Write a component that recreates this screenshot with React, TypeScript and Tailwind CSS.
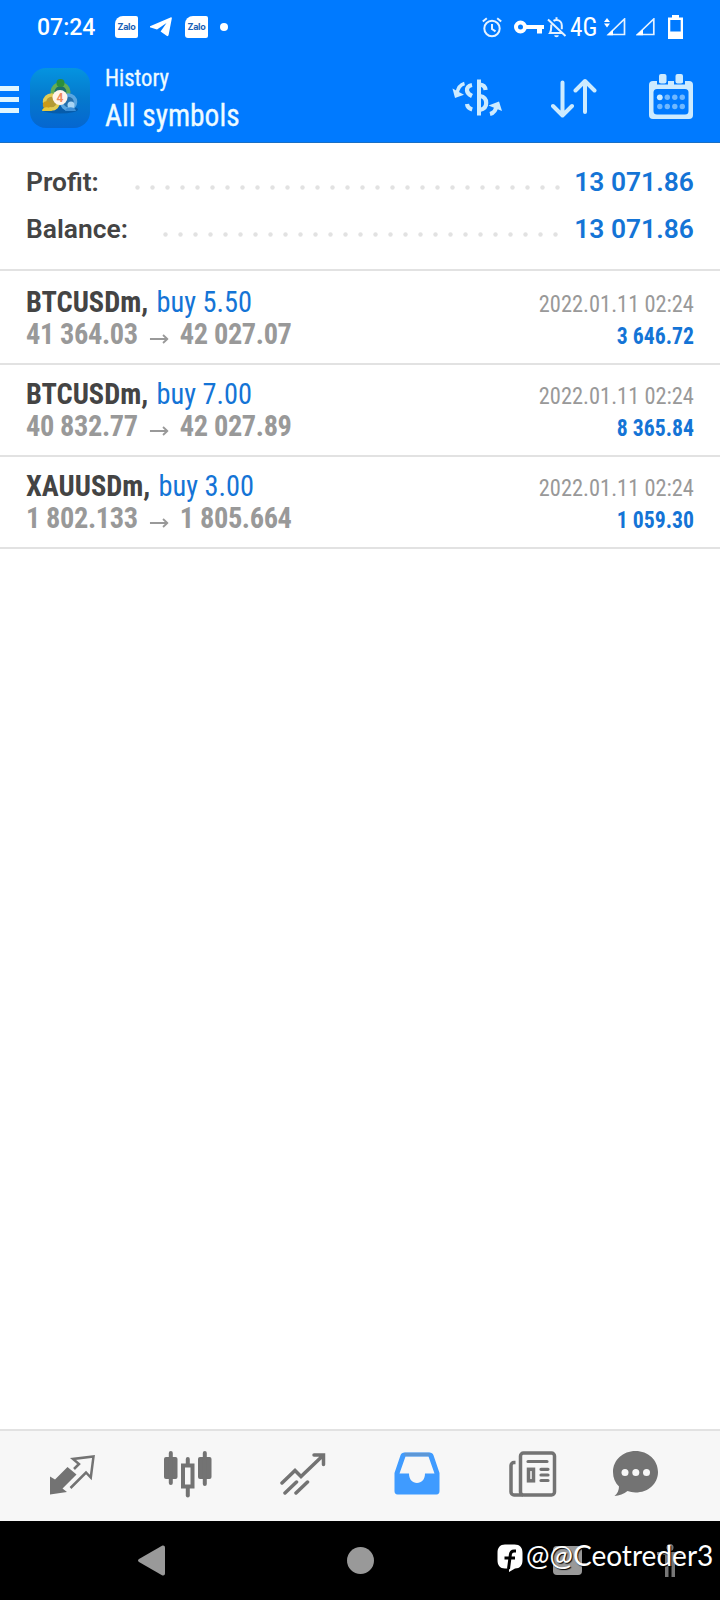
import type {ReactNode} from 'react';

interface IDeal {
    symbol: string;
    action: string;
    open: string;
    close: string;
    time: string;
    profit: string;
}

const deals: IDeal[] = [
    {symbol: 'BTCUSDm,', action: 'buy 5.50', open: '41 364.03', close: '42 027.07', time: '2022.01.11 02:24', profit: '3 646.72'},
    {symbol: 'BTCUSDm,', action: 'buy 7.00', open: '40 832.77', close: '42 027.89', time: '2022.01.11 02:24', profit: '8 365.84'},
    {symbol: 'XAUUSDm,', action: 'buy 3.00', open: '1 802.133', close: '1 805.664', time: '2022.01.11 02:24', profit: '1 059.30'},
];

export default function App() {
    return (
        <div className="flex h-[1600px] w-[720px] flex-col overflow-hidden bg-white font-[Roboto,sans-serif]">
            <header className="h-[143px] shrink-0 border-b border-[#1a6fc4] bg-[#007aff] text-white">
                <StatusBar/>
                <TitleBar/>
            </header>
            <main className="flex-1">
                <section className="h-[128px] border-b-2 border-[#e2e2e2] pt-[16px]">
                    <SummaryRow label="Profit:" value="13 071.86" dots={29} gap={11}/>
                    <SummaryRow label="Balance:" value="13 071.86" dots={27} gap={13}/>
                </section>
                {deals.map((deal, i) => <DealRow key={i} deal={deal} first={i === 0}/>)}
            </main>
            <TabBar/>
            <NavBar/>
        </div>
    );
}

const StatusBar = () => (
    <div className="flex h-[54px] items-center pl-[37px]">
        <span className="w-[78px] pt-[2px] text-[23px] font-medium">07:24</span>
        <Zalo/>
        <svg width="22" height="20" viewBox="0 0 22 20" className="ml-[12px]" fill="#fff">
            <path d="M0 9.200 20.500.4c1-.4 1.500 0 1.300 1L18.600 18c-.3 1.200-1 1.400-2 .8l-6-4.400L16.500 6 7 12.500.6 10.500C-.3 10.200-.4 9.500 0 9.200Z"/>
        </svg>
        <Zalo className="ml-[13px]"/>
        <span className="ml-[12px] size-[8px] rounded-full bg-white"/>
        <svg width="20" height="21" viewBox="0 0 20 21" className="ml-[254px]" fill="none" stroke="#e6f2ff" strokeWidth="2">
            <circle cx="10" cy="11.500" r="7.700"/>
            <path d="M10 7v5l3.500 2.300M.8 4.500 4.800 1.200M19.200 4.500 15.200 1.200"/>
        </svg>
        <svg width="30" height="14" viewBox="0 0 30 14" className="ml-[12px]">
            <circle cx="6.500" cy="7" r="4.500" fill="none" stroke="#fff" strokeWidth="4"/>
            <path d="M12 5h18v4h-2v4.500h-5V9H12Z" fill="#fff"/>
        </svg>
        <svg width="20" height="21" viewBox="0 0 20 21" className="ml-[3px]" fill="none" stroke="#e6f2ff" strokeWidth="2">
            <path d="M6.500 3.800C7.400 3.200 8.200 3 9.500 3c3.300 0 5.300 2.500 5.300 5.500v3.800M4.300 7.500c-.2 4 .1 6.500-1.300 8.500h12.500M9.500 3V.3M1 2.500l17.500 16.500"/>
            <path d="M7.200 18.300h4.600a2.300 2 0 0 1-4.600 0Z" fill="#e6f2ff" stroke="none"/>
        </svg>
        <span className="ml-[3px] w-[28px] origin-left scale-x-[.97] whitespace-nowrap text-[26px] leading-none font-normal font-stretch-condensed">4G</span>
        <svg width="22" height="18" viewBox="0 0 22 18" className="ml-[6px]">
            <path d="M0 4 3 0l3 4ZM0 5.500h6L3 9.500Z" fill="#fff"/>
            <path d="M4.500 16.500 20.500 1v15.500Z" fill="none" stroke="#e6f2ff" strokeWidth="1.700"/>
            <path d="M3 17.200 9 11.500v5.700Z" fill="#fff"/>
        </svg>
        <svg width="19" height="18" viewBox="0 0 19 18" className="ml-[10px]">
            <path d="M1.500 16.500 17.800 1v15.500Z" fill="none" stroke="#e6f2ff" strokeWidth="1.700"/>
            <path d="M0 17.200 7 11.500v5.700Z" fill="#fff"/>
        </svg>
        <svg width="15" height="24" viewBox="0 0 15 24" className="ml-[13px]">
            <path d="M4 0h7v2.500h4V24H0V2.500h4ZM2.300 5v11.500h10.400V5Z" fill="#fff" fillRule="evenodd"/>
        </svg>
    </div>
);

const Zalo = ({className = ''}: {className?: string}) => (
    <span className={`flex h-[22px] w-[23px] items-center justify-center rounded-[2px] rounded-l-[8px] rounded-bl-[3px] bg-white font-[Inter,sans-serif] text-[9px] font-bold tracking-[-0.300px] text-[#1b62b5] ${className}`}>
        Zalo
    </span>
);

const TitleBar = () => (
    <div className="flex h-[88px]">
        <div className="mt-[32px] flex h-[27px] w-[19px] flex-col justify-between">
            <span className="h-[5px] bg-[#e0f6ff]"/>
            <span className="h-[5px] bg-[#e0f6ff]"/>
            <span className="h-[5px] bg-[#e0f6ff]"/>
        </div>
        <AppIcon/>
        <div className="ml-[15px] w-[347px] text-[#eefbff] font-stretch-condensed">
            <p className="mt-[10px] origin-left scale-x-[.945] text-[24px] leading-[28px] [-webkit-text-stroke:0.3px_#eefbff]">History</p>
            <p className="mt-[4px] origin-left scale-x-[.92] text-[32px] leading-[38px] [-webkit-text-stroke:0.3px_#eefbff]">All symbols</p>
        </div>
        <svg width="50" height="38" viewBox="0 0 50 38" className="mt-[25px]" fill="none" stroke="#cdebff" strokeWidth="4.200">
            <path d="M27 .5v36" strokeWidth="4"/>
            <path d="M20 6c-4 .8-5.200 3-5 5.500.2 2.300 2 4 5 5.500M15 25c.3 2.500 2 4.500 5.200 5.500M28 5.700c3.500.3 5.200 2.300 5.600 5.300M28 17c4.200.7 6.200 3.300 6.200 7s-2.200 6.200-6.200 6.800"/>
            <path d="M12.500 4.500c-4 1-6.500 4-7.500 10" strokeWidth="3.500"/>
            <path d="M.5 9.500 3 19l9-3.200Z" fill="#cdebff" stroke="none"/>
            <path d="M38 35c4-1 6.200-4 6.700-9" strokeWidth="4"/>
            <path d="m36.500 26.500 10.500-4 3 9.500Z" fill="#cdebff" stroke="none"/>
        </svg>
        <svg width="46" height="40" viewBox="0 0 46 40" className="ml-[49px] mt-[24px]" fill="none" stroke="#cdebff" strokeWidth="4" strokeLinecap="round" strokeLinejoin="round">
            <path d="M11.500 4.500v31M2 28l9.500 9.500L21 28M34 34V3M24.500 12.500 34 3l9.500 9.500"/>
        </svg>
        <svg width="44" height="45" viewBox="0 0 44 45" className="ml-[52px] mt-[20px]">
            <rect x="0" y="7" width="44" height="38" rx="4" fill="#cdebff"/>
            <rect x="4.500" y="15" width="35" height="25.500" rx="3.500" fill="#007aff"/>
            <path d="M9 3v6.500h9V3M26 3v6.500h9V3" fill="none" stroke="#007aff" strokeWidth="2"/>
            <rect x="10" y="0" width="7.500" height="9.500" rx="2" fill="#cdebff"/>
            <rect x="26.500" y="0" width="7.500" height="9.500" rx="2" fill="#cdebff"/>
            <circle cx="10.800" cy="23.300" r="2.900" fill="#cdebff"/>
            <g fill="#70b8ff">
                <circle cx="18.300" cy="23.300" r="2.700"/>
                <circle cx="25.800" cy="23.300" r="2.700"/>
                <circle cx="33.300" cy="23.300" r="2.700"/>
                <circle cx="10.800" cy="32.500" r="2.700"/>
                <circle cx="18.300" cy="32.500" r="2.700"/>
                <circle cx="25.800" cy="32.500" r="2.700"/>
                <circle cx="33.300" cy="32.500" r="2.700"/>
            </g>
        </svg>
    </div>
);

const AppIcon = () => (
    <svg width="60" height="60" viewBox="0 0 60 60" className="ml-[11px] mt-[14px]">
        <defs>
            <linearGradient id="tile" x1="0" y1="0" x2="0" y2="1">
                <stop offset="0" stopColor="#0594e0"/>
                <stop offset=".5" stopColor="#0579cd"/>
                <stop offset="1" stopColor="#0566d0"/>
            </linearGradient>
        </defs>
        <rect width="60" height="60" rx="16" fill="url(#tile)"/>
        <ellipse cx="30" cy="41.500" rx="18" ry="4" fill="#064f94" opacity=".6"/>
        <circle cx="30.500" cy="24" r="8" fill="#1b6f6a" stroke="#65ad55" strokeWidth="4"/>
        <circle cx="21.500" cy="34" r="7" fill="#b39a35" stroke="#e0cc55" strokeWidth="3.500"/>
        <circle cx="38.500" cy="34" r="7" fill="#2470ad" stroke="#5aa6e0" strokeWidth="3.500"/>
        <circle cx="30.500" cy="15" r="4" fill="#2b8f3c"/>
        <circle cx="16.500" cy="37" r="3.700" fill="#c99a1a"/>
        <path d="M12 43c0-5 9-5 10 0Z" fill="#e6c93c"/>
        <circle cx="41" cy="37" r="3.500" fill="#a9d6f5"/>
        <path d="M35 43c1-5 10-5 11 0Z" fill="#3c8fd8"/>
        <circle cx="30" cy="29.500" r="7.500" fill="#fff4ea"/>
        <text x="30" y="34" textAnchor="middle" fontSize="12" fontWeight="700" fill="#ee8a5c">4</text>
    </svg>
);

const SummaryRow = ({label, value, dots, gap}: {label: string; value: string; dots: number; gap: number}) => (
    <div className="flex h-[47px] items-center px-[26px] text-[26px] font-semibold">
        <span className="origin-left scale-x-[1.015] text-[#444]">{label}</span>
        <svg width={dots * 15} height="5" className="mt-[10px] ml-auto">
            {Array.from({length: dots}, (_, i) => <circle key={i} cx={i * 15 + 7.5} cy="2.500" r="2.200" fill="#e2e2e2"/>)}
        </svg>
        <span className="origin-right scale-x-[1.015] text-right text-[#1474d6]" style={{marginLeft: gap}}>{value}</span>
    </div>
);

const DealRow = ({deal, first}: {deal: IDeal; first: boolean}) => (
    <div className={`flex justify-between border-b-2 border-[#e2e2e2] px-[26px] font-stretch-condensed ${first ? 'h-[94px] pt-[15px]' : 'h-[92px] pt-[13px]'}`}>
        <div className="origin-left scale-x-[.945] whitespace-nowrap">
            <p className="text-[30px] leading-[32px]">
                <b className="mr-[2px] text-[#444]">{deal.symbol}</b> <span className="text-[#1474d6]">{deal.action}</span>
            </p>
            <p className="flex w-[281px] items-center justify-between text-[30px] leading-[32px] font-bold tracking-[-0.400px] text-[#999]">
                {deal.open}
                <svg width="20" height="10" viewBox="0 0 20 10" className="mt-[10px]" fill="none" stroke="#999" strokeWidth="2">
                    <path d="M0 5h18M14 1l4.500 4L14 9"/>
                </svg>
                <span>{deal.close}</span>
            </p>
        </div>
        <div className="whitespace-nowrap pt-[2px] text-right text-[24px] leading-[32px]">
            <p className="origin-right scale-x-[.935] text-[#999]">{deal.time}</p>
            <p className="origin-right scale-x-[.905] font-bold text-[#1474d6]">{deal.profit}</p>
        </div>
    </div>
);

const TabIcon = ({children, className}: {children: ReactNode; className: string}) => (
    <svg width="48" height="48" viewBox="0 0 48 48" className={className}>{children}</svg>
);

const TabBar = () => (
    <nav className="flex h-[92px] shrink-0 border-t-2 border-[#e2e2e2] bg-[#f7f7f7] pt-[20px]">
        <TabIcon className="ml-[49px]">
            <path d="M1 25.500 6 28.500 18.500 16 27.500 23.500 13.500 37.500 18 41 1 43.500Z" fill="#737373"/>
            <path d="M21.500 37 37 21.500l4.800 5L44.500 5.500 24 8l6 5-5 5" fill="none" stroke="#737373" strokeWidth="2.500"/>
        </TabIcon>
        <TabIcon className="ml-[67px]">
            <g fill="#737373">
                <rect x="0" y="6" width="13.500" height="22" rx="2"/>
                <rect x="4.800" y="0" width="4" height="34" rx="2"/>
                <rect x="34" y="6" width="13.500" height="22" rx="2"/>
                <rect x="38.800" y="0" width="4" height="35" rx="2"/>
                <rect x="21.800" y="6" width="4" height="9" rx="2"/>
                <rect x="21.800" y="34" width="4" height="12.500" rx="2"/>
            </g>
            <rect x="19" y="14.500" width="9.500" height="21" fill="none" stroke="#737373" strokeWidth="4"/>
        </TabIcon>
        <TabIcon className="ml-[68px]">
            <path d="M2 32 15 19.500l6 6L43 4.500M34 4h9.500v9.500M5 42 16.500 31M16 42 27.500 31" fill="none" stroke="#737373" strokeWidth="3.500" strokeLinecap="round"/>
        </TabIcon>
        <TabIcon className="ml-[66px]">
            <path d="M10.500 1.500h25c2 0 3.300 1 4 2.800l6 17.700v18c0 2-1 3.500-3 3.500H3.500c-2 0-3-1.500-3-3.500V22l6-17.700c.7-1.800 2-2.800 4-2.800ZM11.500 5.500 5.500 22.500H15c0 6 3.500 9.500 8 9.500s8-3.500 8-9.500h9.500l-6-17Z" fill="#3f9bff" fillRule="evenodd"/>
            <path d="M10.500 3.500h25" stroke="#5d97d6" strokeWidth="3.500"/>
        </TabIcon>
        <TabIcon className="ml-[67px]">
            <g fill="none" stroke="#737373" strokeWidth="3.500">
                <path d="M6.500 11.500H5a3 3 0 0 0-3 3V41a3 3 0 0 0 3 3h9"/>
                <rect x="11.500" y="2" width="34" height="42" rx="3"/>
                <path d="M19 10.500h19M32 18.300h7M32 24h7M32 29.500h7" strokeWidth="3.200" strokeLinecap="round"/>
                <rect x="19.500" y="18.300" width="5" height="11.500" strokeWidth="3.500"/>
            </g>
        </TabIcon>
        <TabIcon className="ml-[55px]">
            <path d="M23.500 0C36 0 46 9 46 21S36 41.500 23.500 41.500c-3 0-5.500-.5-8-1.400C12 43 7 45 2.500 45 5.500 42.500 7 39 7 35.500 3 31.800 1 26.700 1 21 1 9 11 0 23.500 0Z" fill="#737373"/>
            <circle cx="13" cy="21.500" r="3.500" fill="#f7f7f7"/>
            <circle cx="23.800" cy="21.500" r="3.500" fill="#f7f7f7"/>
            <circle cx="34.500" cy="21.500" r="3.500" fill="#f7f7f7"/>
        </TabIcon>
    </nav>
);

const NavBar = () => (
    <div className="relative flex h-[79px] shrink-0 bg-black">
        <svg width="27" height="31" viewBox="0 0 27 31" className="ml-[138px] mt-[24px]" fill="#999">
            <path d="M1 14 24 .8c1.500-.8 3 0 3 1.700v26c0 1.700-1.500 2.500-3 1.700L1 17c-1.300-.8-1.300-2.200 0-3Z"/>
        </svg>
        <span className="ml-[182px] mt-[26px] size-[27px] rounded-full bg-[#999]"/>
        <span className="ml-[179px] mt-[25px] h-[29px] w-[29px] rounded-[4px] bg-[#999]"/>
        <svg width="26" height="33" viewBox="0 0 26 33" className="ml-[75px] mt-[23px]" fill="#777">
            <circle cx="13" cy="3.500" r="3.500"/>
            <path d="M0 8h26v3h-8V33h-3.500V22h-3v11H8V11H0Z"/>
        </svg>
        <div className="absolute left-[497px] top-[21px] flex text-white">
            <svg width="26" height="28" viewBox="0 0 26 28" className="mt-[2px]">
                <path d="M8 .5h9.500c5.500 0 8 3 8 8.500v7c0 5.500-2.500 8.500-7.500 8.500L12 28v-3.500H8C3 24.500.5 21.500.5 16V9C.5 3.500 3 .5 8 .5Z" fill="#fff"/>
                <path d="M19 7h-2c-2.200 0-3.300 1.200-3.600 3.400L11.500 25M7.500 14H18" fill="none" stroke="#000" strokeWidth="3"/>
            </svg>
            <span className="ml-[3px] origin-left scale-x-[1.002] whitespace-nowrap font-[Lato,sans-serif] text-[28px] leading-[27px] [text-shadow:1px_1px_1px_#000]">@@Ceotreder3</span>
        </div>
    </div>
);
